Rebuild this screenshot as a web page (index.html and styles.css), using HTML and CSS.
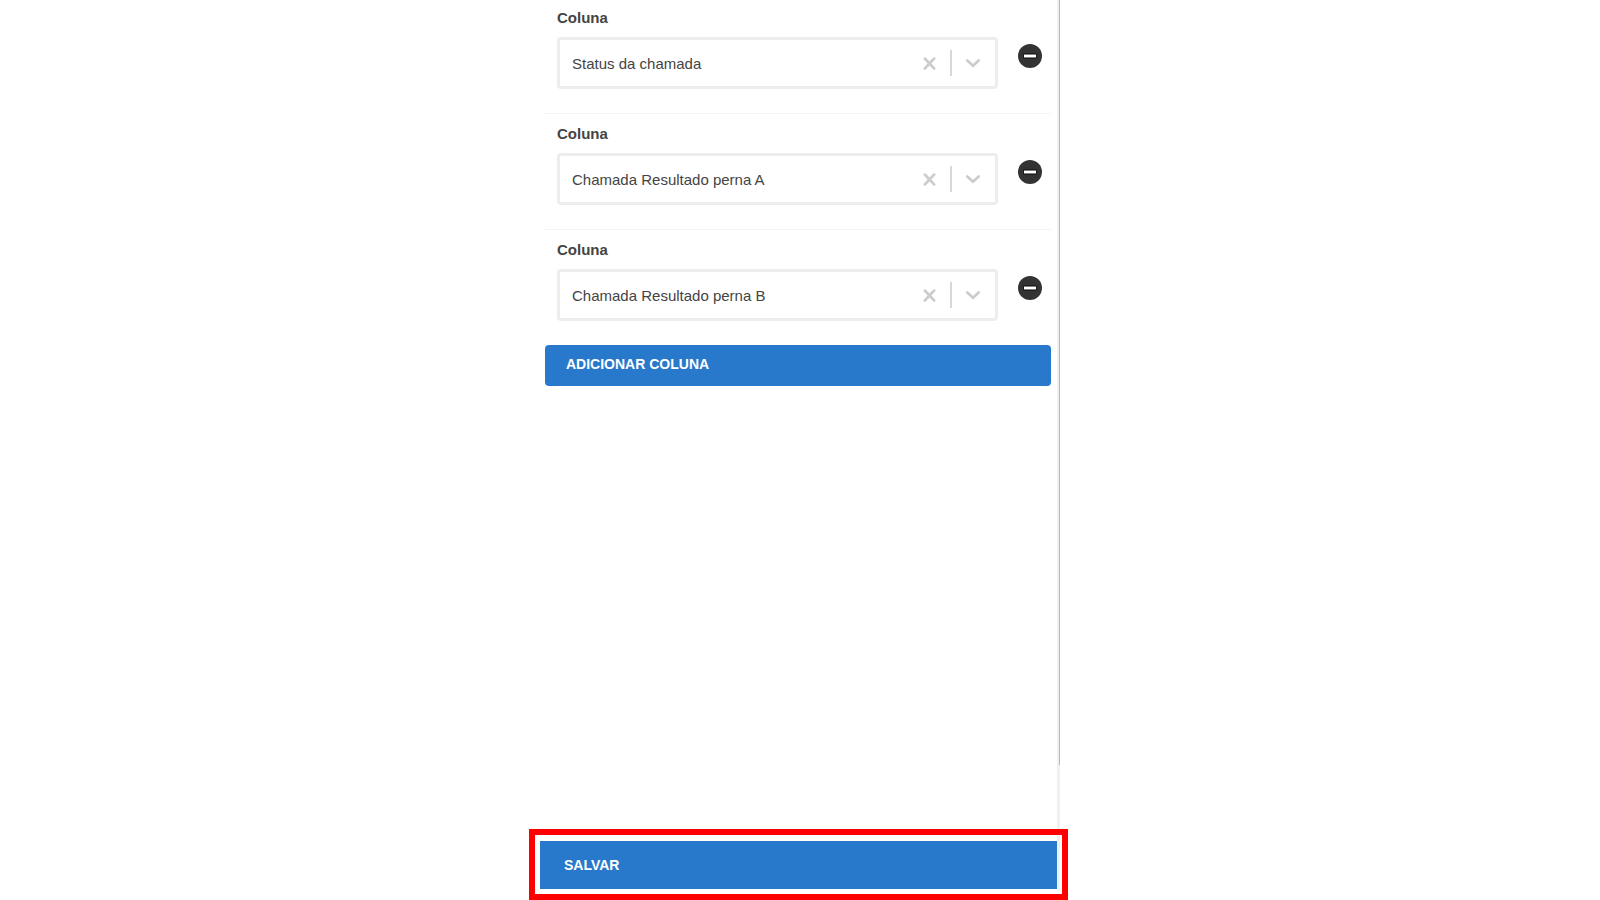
FILE: index.html
```
<!DOCTYPE html>
<html lang="pt-BR">
<head>
    <meta charset="UTF-8">
    <meta name="viewport" content="width=device-width, initial-scale=1.0">
    <title>Colunas</title>
    <link rel="stylesheet" href="styles.css">
</head>
<body>
    <!-- Shared icons -->
    <svg class="icon-defs" aria-hidden="true">
        <symbol id="icon-clear" viewBox="0 0 12 12">
            <path d="M1.8 1.5 10.2 10.5M10.2 1.5 1.8 10.5" fill="none" stroke="currentColor" stroke-width="2.6" stroke-linecap="round"/>
        </symbol>
        <symbol id="icon-chevron" viewBox="0 0 16 10">
            <path d="M2.3 2.5 8 7.7 13.7 2.5" fill="none" stroke="currentColor" stroke-width="2.8" stroke-linecap="round"/>
        </symbol>
        <symbol id="icon-minus" viewBox="0 0 24 24">
            <circle cx="12" cy="12" r="12" fill="#333"/>
            <rect x="5.5" y="9.6" width="13" height="4.8" fill="#000"/>
            <rect x="6" y="10.5" width="12" height="3" fill="#fff"/>
        </symbol>
    </svg>

    <form class="panel">
        <div class="panel-main">
            <div class="columns">
                <div class="column-row">
                    <div class="field">
                        <label for="column-1">Coluna</label>
                        <div class="select-control">
                            <select id="column-1">
                                <option>Status da chamada</option>
                            </select>
                            <button type="button" class="clear-btn" aria-label="Limpar">
                                <svg><use href="#icon-clear"/></svg>
                            </button>
                            <span class="separator"></span>
                            <svg class="chevron"><use href="#icon-chevron"/></svg>
                        </div>
                    </div>
                    <button type="button" class="remove-btn" aria-label="Remover coluna">
                        <svg><use href="#icon-minus"/></svg>
                    </button>
                </div>

                <div class="column-row">
                    <div class="field">
                        <label for="column-2">Coluna</label>
                        <div class="select-control">
                            <select id="column-2">
                                <option>Chamada Resultado perna A</option>
                            </select>
                            <button type="button" class="clear-btn" aria-label="Limpar">
                                <svg><use href="#icon-clear"/></svg>
                            </button>
                            <span class="separator"></span>
                            <svg class="chevron"><use href="#icon-chevron"/></svg>
                        </div>
                    </div>
                    <button type="button" class="remove-btn" aria-label="Remover coluna">
                        <svg><use href="#icon-minus"/></svg>
                    </button>
                </div>

                <div class="column-row">
                    <div class="field">
                        <label for="column-3">Coluna</label>
                        <div class="select-control">
                            <select id="column-3">
                                <option>Chamada Resultado perna B</option>
                            </select>
                            <button type="button" class="clear-btn" aria-label="Limpar">
                                <svg><use href="#icon-clear"/></svg>
                            </button>
                            <span class="separator"></span>
                            <svg class="chevron"><use href="#icon-chevron"/></svg>
                        </div>
                    </div>
                    <button type="button" class="remove-btn" aria-label="Remover coluna">
                        <svg><use href="#icon-minus"/></svg>
                    </button>
                </div>

                <button type="button" class="btn add-btn">ADICIONAR COLUNA</button>
            </div>

            <button type="submit" class="btn save-btn">SALVAR</button>
        </div>

        <div class="scroll-track">
            <div class="scroll-thumb"></div>
        </div>
    </form>
</body>
</html>
```
FILE: styles.css
```
:root {
    --primary: #2879cc;
    --text: #444;
    --border: #ededed;
    --icon: #ccc;
    --highlight: #f00;
}

* {
    margin: 0;
    padding: 0;
    box-sizing: border-box;
}

body {
    font-family: "Liberation Sans", Arial, sans-serif;
    font-size: 15px;
    color: var(--text);
    background: white;
}

button {
    font-family: inherit;
    border: none;
    background: none;
    cursor: pointer;
}

svg {
    display: block;
}

.icon-defs {
    display: none;
}

.panel {
    display: flex;
    max-width: 520px;
    min-height: 100vh;
    margin: 0 auto;
    padding-bottom: 11px;
}

.panel-main {
    flex: 1;
    min-width: 0;
    display: flex;
    flex-direction: column;
}

.columns {
    flex: 1;
    padding: 0 6px 24px 5px;
}

.column-row {
    display: flex;
    align-items: flex-start;
    gap: 20px;
    padding: 11px 9px 24px 12px;
    border-top: 1px solid #f3f3f3;
}

.column-row:first-child {
    padding-top: 9px;
    border-top: none;
}

.field {
    flex: 1;
    min-width: 0;
}

.field label {
    display: block;
    margin-bottom: 10px;
    font-weight: bold;
    line-height: 18px;
}

.select-control {
    display: flex;
    align-items: center;
    height: 52px;
    padding-right: 14px;
    border: 3px solid var(--border);
    border-radius: 4px;
}

.select-control select {
    flex: 1;
    min-width: 0;
    height: 100%;
    padding-left: 12px;
    appearance: none;
    border: none;
    background: none;
    font: inherit;
    color: inherit;
}

.clear-btn {
    padding: 8px;
    color: var(--icon);
}

.clear-btn svg {
    width: 13px;
    height: 13px;
}

.separator {
    width: 2px;
    height: 26px;
    margin: 0 13px 0 6px;
    background: #d8d8d8;
}

.chevron {
    width: 16px;
    height: 10px;
    color: var(--icon);
}

.remove-btn {
    margin-top: 35px;
}

.remove-btn svg {
    width: 24px;
    height: 24px;
}

.btn {
    display: block;
    width: 100%;
    background: var(--primary);
    color: white;
    font-size: 14px;
    font-weight: bold;
    text-align: left;
}

.add-btn {
    padding: 10px 21px 13px;
    border-radius: 4px;
    line-height: 18px;
}

.save-btn {
    position: relative;
    padding: 15px 24px;
    line-height: 18px;
}

/* Frame drawn around the save button */
.save-btn::after {
    content: "";
    position: absolute;
    inset: -12px -11px -11px;
    border: 6px solid var(--highlight);
}

.scroll-track {
    width: 3px;
    background: #f0f0f0;
}

.scroll-thumb {
    height: 86%;
    border-right: 1px solid #b8b8b8;
}
```
